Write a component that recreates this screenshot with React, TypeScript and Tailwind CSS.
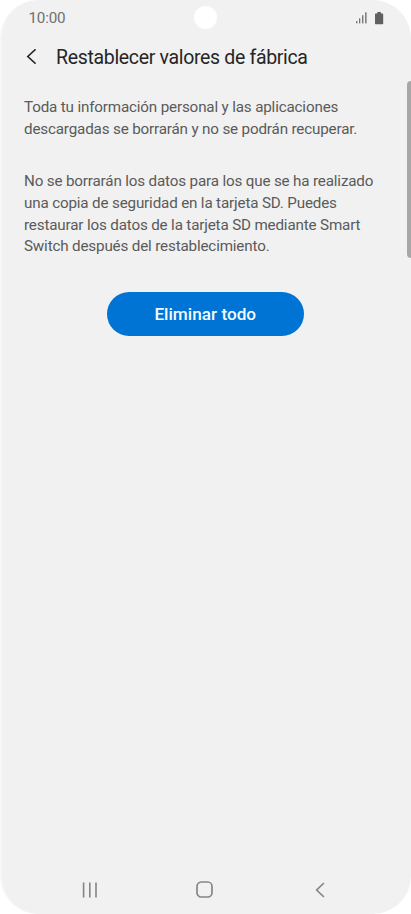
const firstParagraph = [
  'Toda tu información personal y las aplicaciones',
  'descargadas se borrarán y no se podrán recuperar.',
];

const secondParagraph = [
  'No se borrarán los datos para los que se ha realizado',
  'una copia de seguridad en la tarjeta SD. Puedes',
  'restaurar los datos de la tarjeta SD mediante Smart',
  'Switch después del restablecimiento.',
];

function StatusBar() {
  return (
    <div className="relative flex h-9 items-center justify-between pr-[27px] pl-[28.5px] text-[#707070]">
      <span className="text-[15.2px] leading-9 tracking-[-0.2px]">10:00</span>
      {/* Camera hole */}
      <div className="absolute top-1.5 left-[194px] h-[23px] w-[23px] rounded-full bg-white" />
      <div className="flex items-center gap-[7px]">
        <svg width="12" height="12" viewBox="0 0 12 12" fill="#777777">
          <rect x="0.1" y="9" width="1.3" height="2.4" />
          <rect x="3" y="6.3" width="1.3" height="5.1" />
          <rect x="6" y="3.2" width="1.4" height="8.2" />
          <rect x="9.1" y="0.3" width="1.5" height="11.1" />
        </svg>
        <svg width="9" height="13" viewBox="0 0 9 13" fill="#606060">
          <path d="M2.3 0.1h3.6v1.4h1.6q0.7 0 0.7 0.7v9.3q0 0.7-0.7 0.7H0.7q-0.7 0-0.7-0.7V2.2q0-0.7 0.7-0.7h1.6z" />
        </svg>
      </div>
    </div>
  );
}

function Header() {
  return (
    <header className="flex h-[42px] items-center pl-[26px]">
      <button aria-label="Atrás" className="mr-[20px]">
        <svg width="10" height="16" viewBox="0 0 10 16" fill="none" stroke="#252525" strokeWidth="1.6">
          <path d="M9.6 0.3L1.8 7.5l7.8 7.2" />
        </svg>
      </button>
      <h1 className="pt-[2px] text-[19.5px] tracking-[-0.33px] whitespace-nowrap text-[#252525]">
        Restablecer valores de fábrica
      </h1>
    </header>
  );
}

function Paragraph({ lines }: { lines: string[] }) {
  return (
    <p className="text-[15.2px] leading-[21.8px] tracking-[-0.16px] whitespace-nowrap text-[#5a5a5a]">
      {lines.map((line) => (
        <span key={line} className="block">
          {line}
        </span>
      ))}
    </p>
  );
}

function NavigationBar() {
  return (
    <nav className="flex h-[49px] items-center justify-between pr-[86px] pl-[82px]">
      <svg width="16" height="16" viewBox="0 0 16 16" stroke="#858585" strokeWidth="1.6">
        <path d="M1.6 0.5v15M7.8 0.5v15M14 0.5v15" />
      </svg>
      <svg className="mr-[5px]" width="17" height="17" viewBox="0 0 17 17" fill="none" stroke="#858585" strokeWidth="1.7">
        <rect x="1" y="1" width="15" height="15" rx="4.3" />
      </svg>
      <svg width="10" height="16" viewBox="0 0 10 16" fill="none" stroke="#858585" strokeWidth="1.7">
        <path d="M8.9 1L1.7 8l7.2 7" />
      </svg>
    </nav>
  );
}

export default function App() {
  return (
    <div className="h-[914px] w-[411px] overflow-hidden bg-white font-['Roboto',sans-serif]">
      <div className="relative flex h-full flex-col overflow-hidden rounded-[38px] border-l-2 border-[#f6f6f6] bg-[#f1f1f1]">
        <div className="-ml-0.5 flex flex-1 flex-col">
          <StatusBar />
          <Header />
          <main className="flex flex-1 flex-col px-6 pt-[19px]">
            <Paragraph lines={firstParagraph} />
            <div className="h-[30.4px]" />
            <Paragraph lines={secondParagraph} />
            <button className="mt-[33.8px] ml-[82.5px] h-11 w-[197.5px] rounded-full bg-[#0074d4] pt-0.5 text-[17.2px] font-medium text-[#f2fbff]">
              Eliminar todo
            </button>
          </main>
          <NavigationBar />
        </div>
        {/* Scrollbar */}
        <div className="absolute top-[81px] right-0 h-[177px] w-1 rounded-l-full bg-[#a7a7a7]" />
      </div>
    </div>
  );
}
